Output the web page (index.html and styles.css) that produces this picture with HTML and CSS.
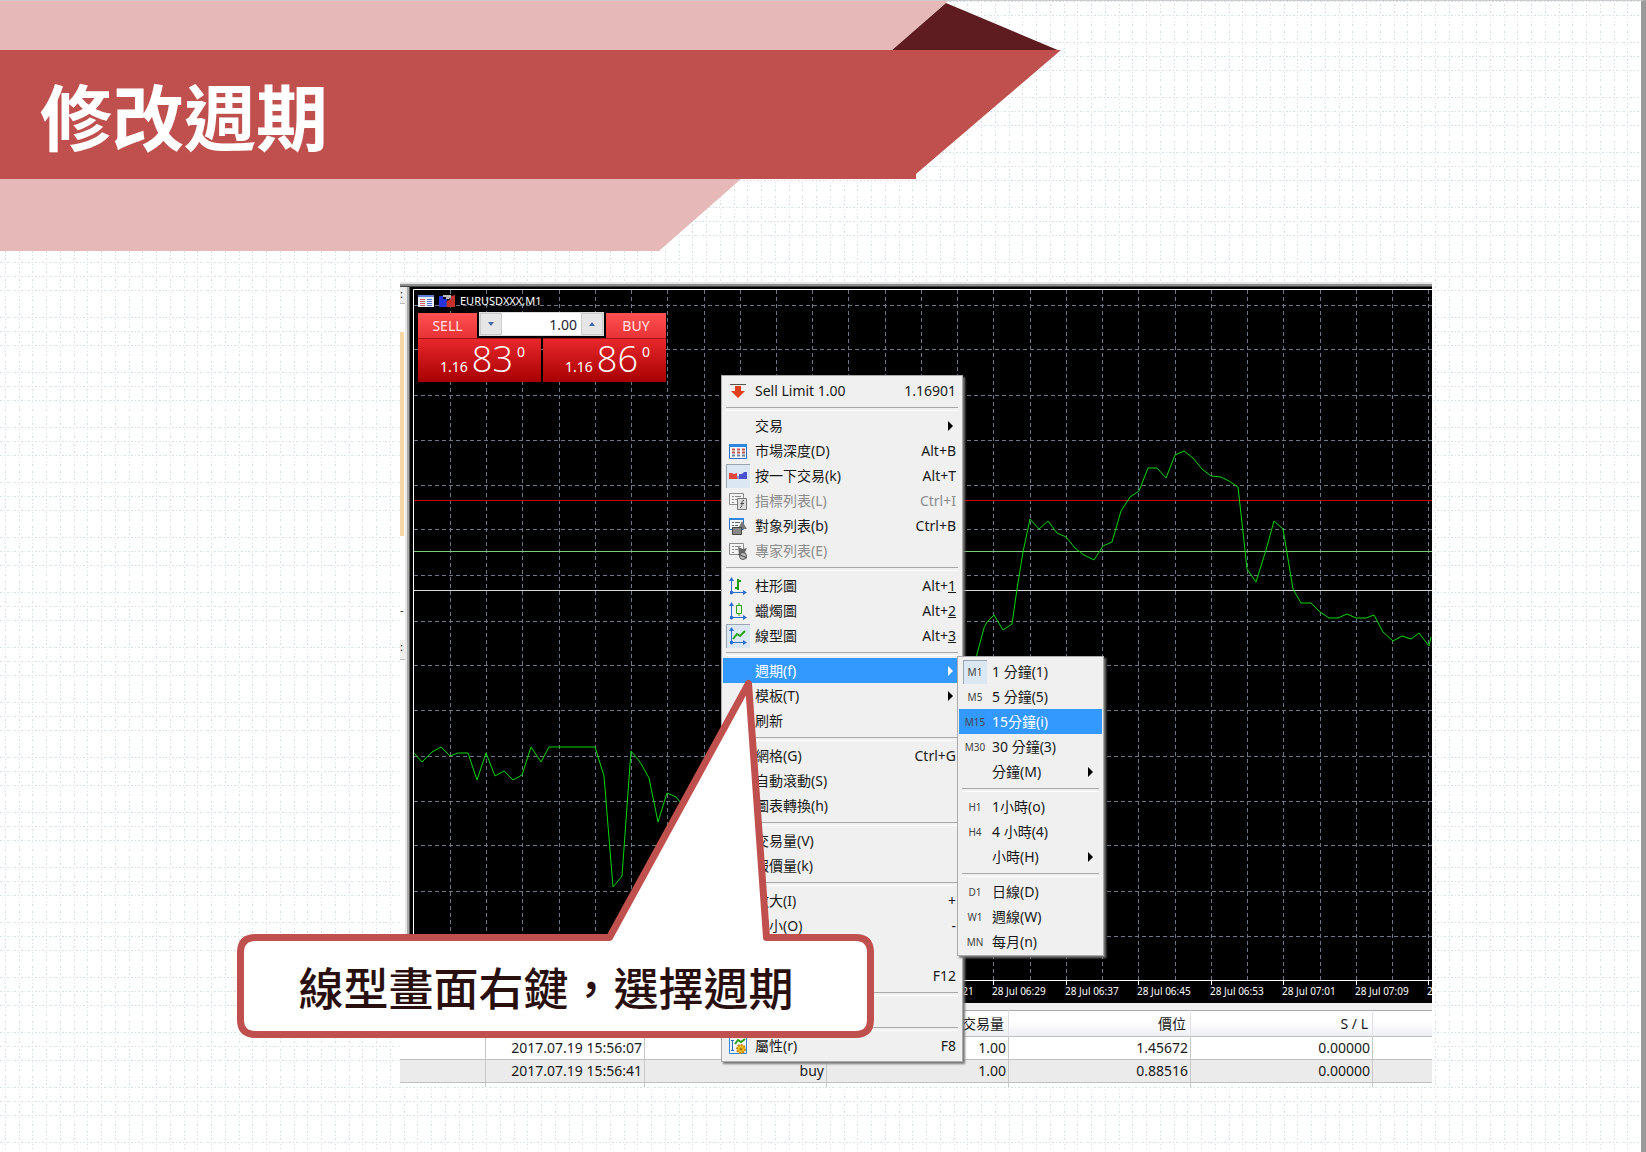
FILE: index.html
```html
<!DOCTYPE html>
<html lang="zh-Hant">
<head>
<meta charset="utf-8">
<title>修改週期</title>
<meta name="viewport" content="width=device-width, initial-scale=1">
<link rel="stylesheet" href="styles.css">
</head>
<body>
<div class="slide">
  <svg class="paper" aria-hidden="true">
    <defs>
      <pattern id="paper-grid" width="55" height="55" patternUnits="userSpaceOnUse">
        <g fill="none" stroke="#d3dfea" stroke-width="1">
          <path d="M5.5 4V55M19.5 4V55M32.5 4V55M46.5 4V55" stroke-dasharray="2 2 1 2 2 4 1 3 1 2 2 5"/>
          <path d="M0 1.5H55M0 15.5H55M0 42.5H55" stroke-dasharray="2 2 1 2 2 2 1 2"/>
        </g>
      </pattern>
    </defs>
    <rect width="100%" height="100%" fill="url(#paper-grid)"/>
  </svg>

  <header class="banner">
    <svg class="ribbon" viewBox="0 0 1062 252" aria-hidden="true">
      <path fill="#e6b9b8" d="M0 1H948L892 50H0zM0 179H741L659 251H0z"/>
      <path fill="#5f1c20" d="M946 3L1060 51H891z"/>
      <path fill="#c0504d" d="M0 50H1061L916 174V179H0z"/>
    </svg>
    <h1>修改週期</h1>
  </header>

  <main class="stage">
    <section class="terminal">
      <div class="workspace">
        <div class="side">
          <span class="side-head">:</span>
          <span class="side-blank"></span>
          <span class="side-beige"></span>
          <span class="side-blank mid">-</span>
          <span class="side-head low">:</span>
        </div>
        <div class="chart">
          <svg class="plot" viewBox="411 288 1021 716" preserveAspectRatio="xMinYMin slice" role="img" aria-label="EURUSDXXX M1">
            <g class="grid-lines">
              <path d="M450.5 291V981M486.5 291V981M522.5 291V981M559.5 291V981M595.5 291V981M631.5 291V981M667.5 291V981M704.5 291V981M740.5 291V981M776.5 291V981M812.5 291V981M848.5 291V981M885.5 291V981M921.5 291V981M957.5 291V981M993.5 291V981M1030.5 291V981M1066.5 291V981M1102.5 291V981M1138.5 291V981M1175.5 291V981M1211.5 291V981M1247.5 291V981M1283.5 291V981M1320.5 291V981M1356.5 291V981M1392.5 291V981M1428.5 291V981"/>
              <path d="M414 306.5H2400M414 350.5H2400M414 396.5H2400M414 441.5H2400M414 486.5H2400M414 530.5H2400M414 576.5H2400M414 622.5H2400M414 666.5H2400M414 711.5H2400M414 757.5H2400M414 802.5H2400M414 846.5H2400M414 892.5H2400M414 937.5H2400"/>
            </g>
            <path stroke="#c80000" d="M414 501.5H2400"/>
            <path stroke="#7ecb7e" d="M414 552.5H2400"/>
            <path stroke="#d8d8d8" d="M414 591.5H2400"/>
            <path class="price" d="M414 754L422 763L432 753L441 748L450 757L458 754H468L477 781L486 754L495 777L504 772L513 781L522 776L531 748L541 763L549 748H595L604 777L613 888L622 877L631 752L640 763L649 779L658 823L667 794L676 798L684 808"/>
            <path class="price" d="M970 690L977 655L984 629L987 623L994 616L1003 631L1012 625L1017 590L1023 553L1030 520L1039 530L1048 522L1057 534L1066 538L1075 549L1084 556L1094 561L1103 547L1112 543L1121 512L1130 498L1139 492L1148 469H1157L1166 479L1175 456L1184 452L1193 459L1202 470L1211 477L1221 478L1229 482L1238 488L1243 533L1247 570L1256 583L1266 551L1274 522L1283 530L1293 590L1301 604H1311L1320 613L1329 619H1338L1347 615L1356 619H1366L1374 616L1383 633L1393 642L1402 637L1411 640L1419 634L1429 647L1431 638"/>
            <path stroke="#fff" fill="none" d="M2400 290.5H413.5V981.5H2400M993.5 981V986M1066.5 981V986M1138.5 981V986M1211.5 981V986M1283.5 981V986M1356.5 981V986M1428.5 981V986"/>
            <g class="dates">
              <text x="920" y="996">28 Jul 06:21</text>
              <text x="992" y="996">28 Jul 06:29</text>
              <text x="1065" y="996">28 Jul 06:37</text>
              <text x="1137" y="996">28 Jul 06:45</text>
              <text x="1210" y="996">28 Jul 06:53</text>
              <text x="1282" y="996">28 Jul 07:01</text>
              <text x="1355" y="996">28 Jul 07:09</text>
              <text x="1427" y="996">2</text>
            </g>
          </svg>

          <div class="symbol">
            <svg width="16" height="14" viewBox="0 0 16 14" aria-hidden="true"><path fill="#e9edf8" d="M0 1H16V13H0z"/><path fill="#5d7fd6" d="M0 1H16V3H0z"/><path stroke="#d06060" d="M2 5.500H7M2 7.500H7M2 9.500H7M2 11.500H7"/><path stroke="#5070d0" d="M9 5.500H14M9 7.500H14M9 9.500H14M9 11.500H14"/></svg>
            <svg width="18" height="14" viewBox="0 0 18 14" aria-hidden="true"><path fill="#2433dd" d="M1 2H5V5H9V13H1z"/><path fill="#c5322b" d="M9 7L13 5V2L17 1V13H9z"/><path fill="#bbb" d="M5 1H13V3L11 5H8V3H5z"/><path fill="#5a3a7a" d="M8 7H9V13H8z"/></svg>
            <span>EURUSDXXX,M1</span>
          </div>

          <div class="deal">
            <button class="side-btn" type="button">SELL</button>
            <div class="volume">
              <button type="button" aria-label="-"><svg width="6" height="4" viewBox="0 0 6 4"><path fill="#4668a8" d="M0 0H6L3 4z"/></svg></button>
              <input type="text" value="1.00" aria-label="Volume">
              <button type="button" aria-label="+"><svg width="6" height="4" viewBox="0 0 6 4"><path fill="#4668a8" d="M0 4H6L3 0z"/></svg></button>
            </div>
            <button class="side-btn" type="button">BUY</button>
            <div class="quote"><small>1.16</small><b>83</b><sup>0</sup></div>
            <div class="quote ask"><small>1.16</small><b>86</b><sup>0</sup></div>
          </div>
        </div>
      </div>

      <table class="orders">
        <colgroup><col class="c1"><col class="c2"><col class="c3"><col class="c3"><col class="c3"><col class="c3"><col></colgroup>
        <thead>
          <tr><th></th><th></th><th></th><th>交易量</th><th>價位</th><th>S / L</th><th></th></tr>
        </thead>
        <tbody>
          <tr><td></td><td>2017.07.19 15:56:07</td><td></td><td>1.00</td><td>1.45672</td><td>0.00000</td><td></td></tr>
          <tr><td></td><td>2017.07.19 15:56:41</td><td>buy</td><td>1.00</td><td>0.88516</td><td>0.00000</td><td></td></tr>
          <tr class="tail"><td></td><td></td><td></td><td></td><td></td><td></td><td></td></tr>
        </tbody>
      </table>
    </section>

    <ul class="menu main-menu">
      <li><button type="button"><i><svg viewBox="0 0 18 18"><path stroke="#555" d="M1 2.500H17"/><path fill="#e2401c" d="M6 4H12V9H16L9 16L2 9H6z"/></svg></i><span>Sell Limit 1.00</span><kbd>1.16901</kbd></button></li>
      <li class="sep"></li>
      <li><button type="button"><i></i><span>交易</span><em class="more"></em></button></li>
      <li><button type="button"><i><svg viewBox="0 0 18 18"><path fill="#f4f8fd" stroke="#2a6fc4" d="M.5 2.500H17.500V16.500H.5z"/><path fill="#2f86dc" d="M0 2H18V5H0z"/><path stroke="#c0574a" stroke-dasharray="3 2" stroke-width="2" d="M3 7.500H16M3 10.500H16"/><path stroke="#6f7fa8" stroke-dasharray="3 2" stroke-width="2" d="M3 13.500H16"/></svg></i><span>市場深度(D)</span><kbd>Alt+B</kbd></button></li>
      <li><button type="button"><i class="on"><svg viewBox="0 0 18 18"><path fill="#e0453f" d="M0 6H3L5 7L8 6V12H0z"/><path fill="#4a50d0" d="M10 7L13 7L15 5H18V12H10z"/><path fill="#9a8fc0" d="M8 9H10V12H8z"/></svg></i><span>按一下交易(k)</span><kbd>Alt+T</kbd></button></li>
      <li><button type="button" disabled><i><svg viewBox="0 0 18 18"><path fill="#f3f3f3" stroke="#8a8a8a" d="M.5 1.500H14.500V12.500H.5z"/><path stroke="#8a8a8a" d="M3 4.500H5M6 4.500H12M3 7.500H5M6 7.500H9M3 10.500H5"/><path fill="#ddd" stroke="#777" d="M8.500 6.500H17.500V17.500H8.500z"/><path fill="none" stroke="#444" d="M15 8.500C13 8 13 10 13 12S12 16 11 15.500M11.500 11.500H15"/></svg></i><span>指標列表(L)</span><kbd>Ctrl+I</kbd></button></li>
      <li><button type="button"><i><svg viewBox="0 0 18 18"><path fill="#f4f8fd" stroke="#2a6fc4" d="M.5 1.500H14.500V12.500H.5z"/><path fill="#2f86dc" d="M0 1H15V3H0z"/><path stroke="#666" d="M3 5.500H5M6 5.500H11M3 8.500H5M6 8.500H9"/><path fill="#777" d="M13 4L18 12H9z"/><path fill="#888" stroke="#444" d="M3.500 10.500H12.500V17.500H3.500z"/></svg></i><span>對象列表(b)</span><kbd>Ctrl+B</kbd></button></li>
      <li><button type="button" disabled><i><svg viewBox="0 0 18 18"><path fill="#f3f3f3" stroke="#8a8a8a" d="M.5 1.500H14.500V12.500H.5z"/><path stroke="#8a8a8a" d="M3 4.500H5M6 4.500H12M3 7.500H5M6 7.500H9M3 10.500H5"/><path fill="#666" d="M9 5L14 7L18 6L16 10L17 12H10z"/><circle cx="14" cy="14" r="3.500" fill="#bbb" stroke="#555"/><path stroke="#444" d="M9 12L18 16"/></svg></i><span>專家列表(E)</span></button></li>
      <li class="sep"></li>
      <li><button type="button"><i><svg viewBox="0 0 18 18"><path class="axis" d="M2.500 1V17.500M1 15.500H17"/><path class="axis-tip" d="M2.500 0L5 4H0zM18 15.500L14 13V18zM1 14H4V17H1z"/><path fill="none" stroke="#1f9a10" stroke-width="2" d="M9 2V13M9 4H12M6 11H9"/></svg></i><span>柱形圖</span><kbd>Alt+<u>1</u></kbd></button></li>
      <li><button type="button"><i><svg viewBox="0 0 18 18"><path class="axis" d="M2.500 1V17.500M1 15.500H17"/><path class="axis-tip" d="M2.500 0L5 4H0zM18 15.500L14 13V18zM1 14H4V17H1z"/><path fill="#e9f7e4" stroke="#2aa31a" d="M7.500 3.500H12.500V11.500H7.500zM10 1V3M10 12V14"/></svg></i><span>蠟燭圖</span><kbd>Alt+<u>2</u></kbd></button></li>
      <li><button type="button"><i class="on"><svg viewBox="0 0 18 18"><path class="axis" d="M2.500 1V17.500M1 15.500H17"/><path class="axis-tip" d="M2.500 0L5 4H0zM18 15.500L14 13V18zM1 14H4V17H1z"/><path fill="none" stroke="#2aa31a" stroke-width="2" d="M4 12L8 7L11 9L16 4"/></svg></i><span>線型圖</span><kbd>Alt+<u>3</u></kbd></button></li>
      <li class="sep"></li>
      <li><button type="button" class="active"><i></i><span>週期(f)</span><em class="more"></em></button></li>
      <li><button type="button"><i></i><span>模板(T)</span><em class="more"></em></button></li>
      <li><button type="button"><i></i><span>刷新</span></button></li>
      <li class="sep"></li>
      <li><button type="button"><i></i><span>網格(G)</span><kbd>Ctrl+G</kbd></button></li>
      <li><button type="button"><i></i><span>自動滾動(S)</span></button></li>
      <li><button type="button"><i></i><span>圖表轉換(h)</span></button></li>
      <li class="sep"></li>
      <li><button type="button"><i></i><span>交易量(V)</span></button></li>
      <li><button type="button"><i></i><span>報價量(k)</span></button></li>
      <li class="sep"></li>
      <li><button type="button"><i></i><span>放大(I)</span><kbd>+</kbd></button></li>
      <li><button type="button"><i></i><span>縮小(O)</span><kbd>-</kbd></button></li>
      <li class="row"></li>
      <li><button type="button"><i></i><kbd>F12</kbd></button></li>
      <li class="sep"></li>
      <li class="row"></li>
      <li class="sep"></li>
      <li><button type="button"><i><svg viewBox="0 0 18 18"><path fill="#f4f8fd" stroke="#2f86dc" d="M.5 .5H17.500V16.500H.5z"/><path stroke="#2a6fc4" d="M3.500 3V14M2 3.500H5M2 13.500H5"/><path fill="none" stroke="#2aa31a" stroke-width="2" d="M6 7L9 3L12 5L16 2"/><circle cx="12" cy="12" r="4" fill="#f0c020" stroke="#c08a10" stroke-width="2" stroke-dasharray="2 1"/><circle cx="12" cy="12" r="1.500" fill="#a87a10"/></svg></i><span>屬性(r)</span><kbd>F8</kbd></button></li>
    </ul>

    <ul class="menu sub-menu">
      <li><button type="button"><i class="on">M1</i><span>1 分鐘(1)</span></button></li>
      <li><button type="button"><i>M5</i><span>5 分鐘(5)</span></button></li>
      <li><button type="button" class="active"><i>M15</i><span>15分鐘(i)</span></button></li>
      <li><button type="button"><i>M30</i><span>30 分鐘(3)</span></button></li>
      <li><button type="button"><i></i><span>分鐘(M)</span><em class="more"></em></button></li>
      <li class="sep"></li>
      <li><button type="button"><i>H1</i><span>1小時(o)</span></button></li>
      <li><button type="button"><i>H4</i><span>4 小時(4)</span></button></li>
      <li><button type="button"><i></i><span>小時(H)</span><em class="more"></em></button></li>
      <li class="sep"></li>
      <li><button type="button"><i>D1</i><span>日線(D)</span></button></li>
      <li><button type="button"><i>W1</i><span>週線(W)</span></button></li>
      <li><button type="button"><i>MN</i><span>每月(n)</span></button></li>
    </ul>

    <div class="callout">
      <svg viewBox="237 678 638 362" aria-hidden="true"><path fill="#fff" stroke="#c0504d" stroke-width="7" stroke-linejoin="round" d="M255.500 938.500H609.500L748.500 684.500L766.500 938.500H855.500Q870.500 938.500 870.500 953.500V1020.500Q870.500 1035.500 855.500 1035.500H255.500Q240.500 1035.500 240.500 1020.500V953.500Q240.500 938.500 255.500 938.500z"/></svg>
      <p>線型畫面右鍵，選擇週期</p>
    </div>
  </main>
</div>
</body>
</html>
```
FILE: styles.css
```css
* { box-sizing: border-box; }

body {
  margin: 0;
  background: #fff;
  color: #1a1a1a;
  font-family: "Noto Sans", "Noto Sans CJK TC", sans-serif;
  font-size: 14px;
}

button, input { font: inherit; color: inherit; }

.slide {
  position: relative;
  min-height: 100vh;
  border-top: 1px solid #ccc;
  border-right: 5px solid #999;
  overflow: hidden;
}

.paper {
  position: absolute;
  inset: -1px 0 0 0;
  width: 100%;
  height: 100%;
}

.banner {
  position: relative;
  height: 282px;
  margin-top: -1px;
}

.ribbon {
  position: absolute;
  top: 0;
  left: 0;
  width: 1062px;
  height: 252px;
}

h1 {
  position: relative;
  margin: 0;
  padding: 64px 40px 0;
  color: #fff;
  font-family: "DFKai-SB", "BiauKai", "Noto Sans CJK TC", serif;
  font-size: 72px;
  font-weight: 700;
  line-height: 100px;
}

/* terminal window with the chart and the order list */
.stage {
  position: relative;
  width: 63%;
  max-width: 1032px;
  margin-left: 400px;
  padding-bottom: 48px;
}

.terminal { background: #fff; overflow: hidden; }

.workspace {
  display: grid;
  grid-template-columns: 11px 1fr;
  padding-top: 5px;
  background: linear-gradient(#e4e4e4 0 2px, #8c8c8c 2px 4px, #444 4px 5px);
  background-size: 100% 5px;
  background-repeat: no-repeat;
}

.side {
  display: flex;
  flex-direction: column;
  background: linear-gradient(90deg, #e8e8e8 0 2px, #aaa 2px 4px, #555 4px 5px, #000 5px) right / 6px 100% no-repeat;
  padding-right: 6px;
  font-size: 11px;
}

.side-head {
  height: 17px;
  background: #eee;
  border-bottom: 1px solid #bbb;
  line-height: 14px;
}

.side-blank { height: 28px; }
.side-beige { width: 4px; height: 204px; background: #f5d7a4; }

.side-blank.mid {
  height: 104px;
  padding-top: 64px;
  line-height: 20px;
}

.side-head.low { height: 20px; }

.chart { position: relative; min-width: 0; background: #000; }

.plot { display: block; width: 100%; height: 716px; }

.grid-lines { stroke: #66788a; stroke-dasharray: 4 3; }
.price { fill: none; stroke: #00d800; stroke-width: 1; }
.dates { fill: #fff; font-size: 10px; }

.symbol {
  position: absolute;
  top: 7px;
  left: 7px;
  display: flex;
  align-items: center;
  gap: 4px;
  color: #fff;
  font-size: 11px;
  line-height: 14px;
}

.deal {
  position: absolute;
  top: 25px;
  left: 7px;
  display: grid;
  grid-template-columns: 59px 64px 2px 63px 60px;
  grid-template-rows: 26px 44px;
  color: #fff;
}

.side-btn {
  margin: 1px 0 0;
  padding: 0;
  border: 0;
  background: linear-gradient(#ff5252, #e83236);
  color: #ffe3e3;
  font-size: 14px;
  line-height: 22px;
}

.volume {
  grid-column: 2 / 5;
  display: flex;
  height: 24px;
  margin: 0 2px;
  border: 1px solid #ddd;
  background: #fff;
}

.volume button {
  display: grid;
  place-items: center;
  flex: none;
  width: 22px;
  padding: 0;
  border: 1px solid #ccc;
  background: #e6e6e6;
}

.volume input {
  flex: 1;
  min-width: 0;
  padding: 0 4px;
  border: 0;
  background: #fff;
  color: #223;
  text-align: right;
}

.quote {
  grid-column: 1 / 3;
  display: flex;
  align-items: baseline;
  justify-content: center;
  gap: 4px;
  padding-left: 6px;
  border-top: 1px solid #a01010;
  background: linear-gradient(#e8282c, #a80000);
  line-height: 40px;
}

.quote.ask { grid-column: 4 / 6; }
.quote small { font-size: 14px; }
.quote b { font-family: "Open Sans", "Noto Sans", sans-serif; font-size: 36px; font-weight: 300; }
.quote sup { align-self: flex-start; font-size: 14px; line-height: 26px; }

.orders {
  width: 100%;
  border-top: 7px solid #eee;
  border-collapse: separate;
  border-spacing: 0;
  table-layout: fixed;
  white-space: nowrap;
}

.c1 { width: 86px; }
.c2 { width: 159px; }
.c3 { width: 182px; }

.orders th, .orders td {
  padding: 0 2px;
  border-right: 1px solid #c8c8c8;
  border-bottom: 1px solid #c0c0c0;
  text-align: right;
  font-weight: 400;
  line-height: 22px;
  height: 23px;
}

.orders th {
  height: 27px;
  padding: 0 4px;
  border-top: 1px solid #aaa;
  border-right-color: #e0e0e6;
  background: linear-gradient(#fff 40%, #eeeff3);
}

.orders tr > :last-child { border-right: 0; }
.orders tr:nth-child(2) td { background: #ebebeb; }
.orders .tail td { height: 4px; border-bottom: 0; }

/* context menus */
.menu {
  position: absolute;
  margin: 0;
  padding: 3px 2px;
  background: #f0f0f0;
  box-shadow: inset 0 0 0 1px #aaa, 2px 2px 2px #777;
  list-style: none;
}

.main-menu { top: 93px; left: 321px; width: 242px; padding-bottom: 4px; }
.sub-menu { top: 374px; left: 557px; width: 147px; padding-bottom: 2px; }

.menu .row { height: 25px; }

.menu .sep {
  height: 10px;
  padding: 4px 3px;
}

.menu .sep::before {
  content: "";
  display: block;
  height: 2px;
  border-top: 1px solid #a8a8a8;
  border-bottom: 1px solid #fff;
}

.menu button {
  display: flex;
  align-items: center;
  width: 100%;
  height: 25px;
  padding: 0 5px 0 3px;
  border: 0;
  background: none;
  line-height: 24px;
  text-align: left;
  white-space: nowrap;
}

.sub-menu button { padding: 0 9px 0 4px; }
.menu button:disabled { color: #8c8c8c; }
.menu button.active { background: #3399ff; color: #fff; }

.menu i {
  display: grid;
  place-items: center;
  flex: none;
  width: 24px;
  height: 24px;
  margin-right: 5px;
  color: #444;
  font-size: 10px;
  font-style: normal;
}

.menu i.on { background: #dbe7f3; box-shadow: inset 1px 1px 0 #9aa5b4; }
.menu i svg { width: 18px; height: 18px; }
.menu kbd { margin-left: auto; font: inherit; }

.axis { stroke: #2f6fd0; }
.axis-tip { fill: #2f6fd0; }

.more {
  margin-left: auto;
  margin-right: 3px;
  border-left: 5px solid #000;
  border-top: 5px solid transparent;
  border-bottom: 5px solid transparent;
}

.sub-menu .more { margin-right: 0; }
.active .more { border-left-color: #fff; }

.callout {
  position: absolute;
  top: 395px;
  left: -163px;
  width: 638px;
}

.callout svg { display: block; width: 100%; }

.callout p {
  position: absolute;
  inset: 261px 20px auto 0;
  margin: 0;
  color: #2a0f0f;
  font-family: "DFKai-SB", "BiauKai", "Noto Sans CJK TC", serif;
  font-size: 45px;
  font-weight: 500;
  line-height: 97px;
  text-align: center;
}
```
